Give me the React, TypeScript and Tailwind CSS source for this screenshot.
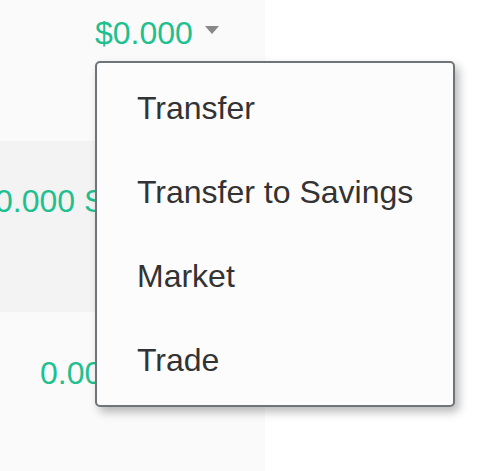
import React from 'react';

const MENU_ITEMS = ['Transfer', 'Transfer to Savings', 'Market', 'Trade'];

export default function App() {
  return (
    <div
      className="relative flex h-[471px] w-full overflow-hidden bg-white"
      style={{ fontFamily: '"Liberation Sans", Arial, sans-serif' }}
    >
      {/* balance column */}
      <div className="flex w-[265px] shrink-0 flex-col bg-[#fafafa]">
        <div className="h-[141px] pl-[95px] pt-[15px]">
          <button className="flex items-center gap-[12px] text-[32px] leading-[36px] text-[#1fc08f]">
            <span>$0.000</span>
            <span className="mb-[6px] h-0 w-0 border-x-[7.5px] border-t-[8px] border-x-transparent border-t-[#888888]" />
          </button>
        </div>
        <div className="relative h-[171px] shrink-0 bg-[#f3f3f3]">
          <div className="absolute left-[-5px] top-[42px] whitespace-nowrap text-[32px] leading-[36px] text-[#1fc08f]">
            0.000 STEEM
          </div>
        </div>
        <div className="flex-1 pl-[40px] pt-[43px]">
          <span className="whitespace-nowrap text-[32px] leading-[36px] text-[#1fc08f]">0.000 STEEM</span>
        </div>
      </div>
      <div className="flex-1 bg-white" />

      {/* dropdown menu */}
      <ul className="absolute left-[95px] top-[61px] w-[360px] rounded-[5px] border-2 border-[#6f7478] bg-[#fcfcfc] py-[3px] shadow-[4px_5px_10px_rgba(0,0,0,0.28)]">
        {MENU_ITEMS.map((label) => (
          <li
            key={label}
            className="flex h-[84px] items-center pl-[40px] text-[32px] text-[#333333]"
          >
            {label}
          </li>
        ))}
      </ul>
    </div>
  );
}
